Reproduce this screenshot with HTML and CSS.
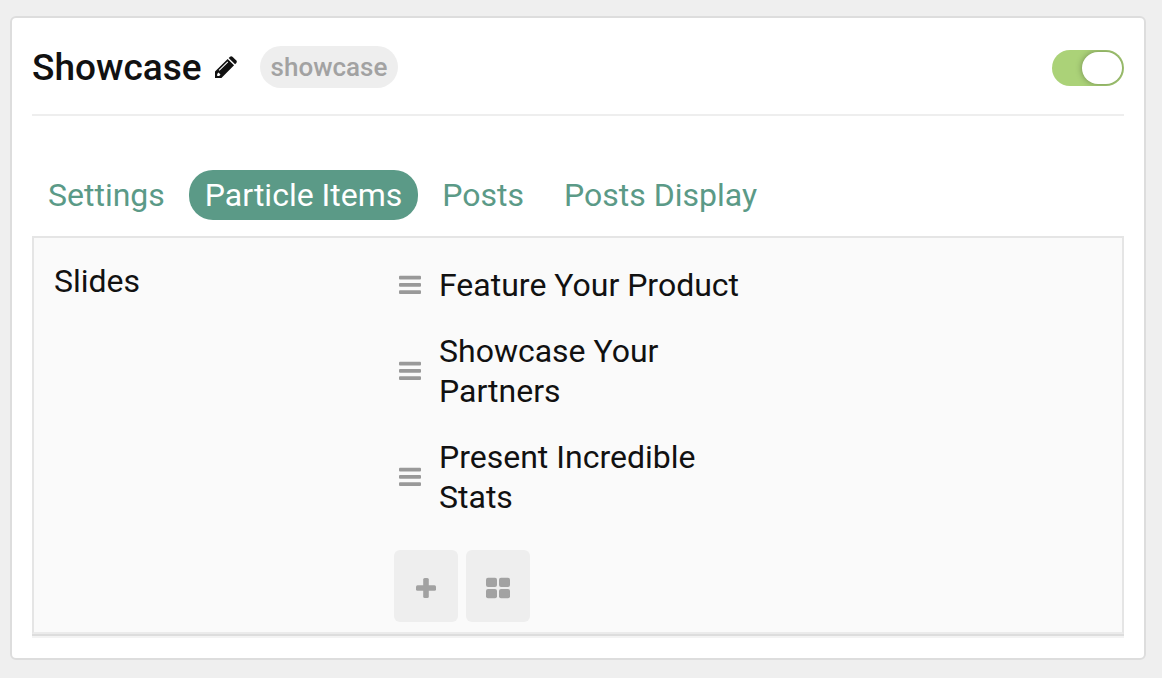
FILE: index.html
```html
<!DOCTYPE html>
<html lang="en">
<head>
<meta charset="utf-8">
<meta name="viewport" content="width=device-width, initial-scale=1">
<title>Showcase</title>
<link rel="stylesheet" href="styles.css">
</head>
<body>
<main class="card">
  <header class="card-header">
    <h1 class="title">Showcase</h1>
    <button class="edit" type="button" aria-label="Edit title">
      <svg viewBox="0 0 24 24" width="22" height="22" aria-hidden="true">
        <path fill="#111" fill-rule="evenodd" d="M0 24V17L13.800 3.200L20.800 10.200L7 24ZM2.400 19.500V21.700H4.600L6 20.300L3.800 18.100ZM4.900 16.200L14.400 6.700L13.600 5.900L4.100 15.400Z"/>
        <path fill="#111" d="M14.900 2.100L16.400 .7Q17.700 -.3 19 .7L23.300 5Q24.300 6.300 23.300 7.600L21.900 9.100Z"/>
      </svg>
    </button>
    <span class="badge">showcase</span>
    <input class="toggle" type="checkbox" role="switch" aria-label="Enabled" checked>
  </header>
  <nav class="tabs">
    <a class="tab" href="#settings">Settings</a>
    <a class="tab tab-active" href="#items" aria-current="page">Particle Items</a>
    <a class="tab" href="#posts">Posts</a>
    <a class="tab" href="#display">Posts Display</a>
  </nav>
  <section class="panel">
    <h2 class="label">Slides</h2>
    <div class="field">
      <ul class="slides">
        <li class="slide">
          <svg class="handle" viewBox="0 0 22 20" aria-hidden="true"><rect y=".7" width="22" height="3.800" rx="1"/><rect y="8" width="22" height="3.800" rx="1"/><rect y="15.300" width="22" height="3.800" rx="1"/></svg>
          <span>Feature Your Product</span>
        </li>
        <li class="slide">
          <svg class="handle" viewBox="0 0 22 20" aria-hidden="true"><rect y=".7" width="22" height="3.800" rx="1"/><rect y="8" width="22" height="3.800" rx="1"/><rect y="15.300" width="22" height="3.800" rx="1"/></svg>
          <span>Showcase Your Partners</span>
        </li>
        <li class="slide">
          <svg class="handle" viewBox="0 0 22 20" aria-hidden="true"><rect y=".7" width="22" height="3.800" rx="1"/><rect y="8" width="22" height="3.800" rx="1"/><rect y="15.300" width="22" height="3.800" rx="1"/></svg>
          <span>Present Incredible Stats</span>
        </li>
      </ul>
      <div class="actions">
        <button class="action" type="button" aria-label="Add slide">
          <svg viewBox="0 0 24 24" width="24" height="24" fill="#a2a2a2" aria-hidden="true">
            <rect x="9.200" y="2" width="5.600" height="20" rx="1.500"/>
            <rect x="2" y="9.200" width="20" height="5.600" rx="1.500"/>
          </svg>
        </button>
        <button class="action" type="button" aria-label="Edit all slides">
          <svg viewBox="0 0 24 24" width="24" height="24" fill="#a2a2a2" aria-hidden="true">
            <rect x="0" y="1.800" width="11" height="9.200" rx="2"/>
            <rect x="13" y="1.800" width="11" height="9.200" rx="2"/>
            <rect x="0" y="13" width="11" height="9.200" rx="2"/>
            <rect x="13" y="13" width="11" height="9.200" rx="2"/>
          </svg>
        </button>
      </div>
    </div>
  </section>
</main>
</body>
</html>
```
FILE: styles.css
```css
* {
  box-sizing: border-box;
}

body {
  margin: 0;
  padding: 16px 16px 18px 10px;
  background: #efefef;
  color: #111;
  font: 32px/40px Roboto, "Liberation Sans", sans-serif;
}

.card {
  padding: 0 20px 20px;
  background: #fff;
  border: 2px solid #ddd;
  border-radius: 6px;
}

.card-header {
  display: flex;
  align-items: center;
  padding: 28px 0 24px;
  border-bottom: 2px solid #eee;
}

.title {
  margin: 0;
  font-size: 37px;
  font-weight: 500;
  line-height: 44px;
}

.edit {
  display: flex;
  margin: 0 23px 0 13px;
  padding: 0 0 2px;
  background: none;
  border: 0;
}

.badge {
  align-self: flex-start;
  padding: 0 11px;
  border-radius: 21px;
  background: #eee;
  color: #a2a2a2;
  font-size: 26px;
  font-weight: 500;
  line-height: 42px;
}

.toggle {
  appearance: none;
  display: flex;
  justify-content: flex-end;
  width: 72px;
  height: 36px;
  margin: 0 0 0 auto;
  padding: 2px;
  border-radius: 18px;
  background: #abd278;
  overflow: hidden;
}

.toggle::before {
  content: "";
  width: 40px;
  height: 32px;
  border-radius: 16px;
  background: #fff;
  box-shadow: 0 0 6px rgba(0, 0, 0, 0.35);
}

.tabs {
  display: flex;
  flex-wrap: wrap;
  gap: 8px;
  margin: 54px 0 16px;
}

.tab {
  padding: 0 16px;
  border-radius: 24px;
  color: #5b9a87;
  line-height: 50px;
  text-decoration: none;
}

.tab-active {
  background: #5b9a87;
  color: #fff;
}

.panel {
  display: grid;
  grid-template-columns: 340fr 708fr;
  padding: 23px 20px 10px;
  background: #fafafa;
  border: 2px solid #e5e5e5;
  border-bottom-color: #ebebeb;
  box-shadow: 0 2px #ddd, 0 4px #f3f3f3;
  margin-bottom: 4px;
}

.label {
  margin: 0;
  font-size: 32px;
  font-weight: 400;
}

.slides {
  display: flex;
  flex-direction: column;
  gap: 26px;
  max-width: 352px;
  margin: 0;
  padding: 4px 0 0 5px;
  list-style: none;
}

.slide {
  display: flex;
  align-items: center;
  gap: 18px;
}

.handle {
  flex: none;
  width: 22px;
  height: 20px;
  fill: #999;
}

.actions {
  display: flex;
  gap: 8px;
  margin-top: 33px;
}

.action {
  display: flex;
  align-items: center;
  justify-content: center;
  width: 64px;
  height: 72px;
  padding: 4px 0 0;
  border: 0;
  border-radius: 6px;
  background: #eee;
}
```
